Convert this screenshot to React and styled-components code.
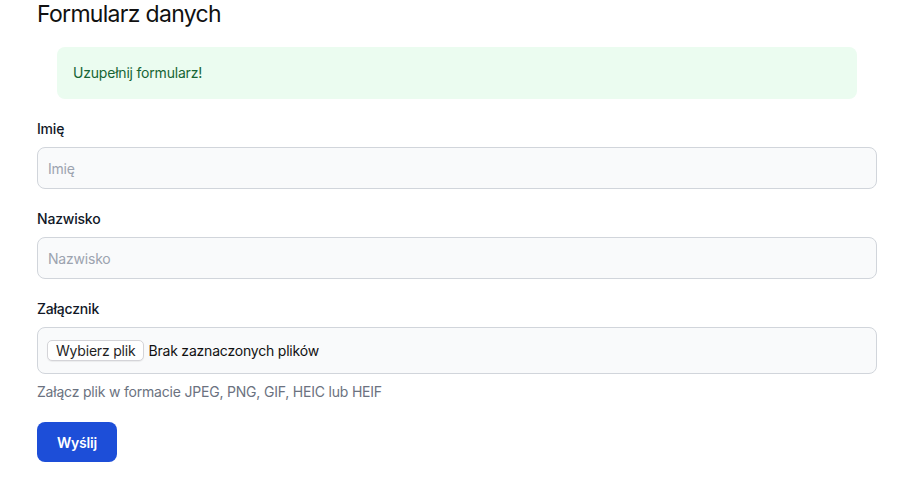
import React from 'react';
import styled, { createGlobalStyle } from 'styled-components';

const GlobalStyle = createGlobalStyle`
  body {
    margin: 0;
    background: #ffffff;
    font-family: Inter, "Noto Sans", "Liberation Sans", sans-serif;
    color: #111827;
    letter-spacing: -0.2px;
  }
  * {
    box-sizing: border-box;
  }
`;

const Page = styled.main`
  width: 840px;
  margin-left: 37px;
`;

const Title = styled.h1`
  margin: 0 0 19px 0;
  font-size: 23px;
  line-height: 28px;
  font-weight: 400;
  letter-spacing: -0.7px;
  color: #111111;
`;

const Alert = styled.div`
  margin: 0 20px 20px 20px;
  padding: 16px;
  border-radius: 8px;
  background-color: #ebfcf0;
  color: #166534;
  font-size: 14px;
  line-height: 20px;
`;

const Field = styled.div`
  margin-bottom: 20px;
`;

const Label = styled.label`
  display: block;
  margin-bottom: 8px;
  font-size: 14px;
  line-height: 20px;
  font-weight: 500;
  color: #111827;
`;

const TextInput = styled.input`
  display: block;
  width: 100%;
  height: 42px;
  padding: 10px;
  border: 1px solid #d1d5db;
  border-radius: 8px;
  background-color: #f9fafb;
  font-family: inherit;
  font-size: 14px;
  line-height: 20px;
  letter-spacing: -0.2px;
  color: #111827;
  outline: none;
  &::placeholder {
    color: #9ca3af;
  }
`;

const FileBox = styled.label`
  display: flex;
  align-items: center;
  gap: 4px;
  height: 47px;
  padding: 0 9px;
  border: 1px solid #d1d5db;
  border-radius: 8px;
  background-color: #f9fafb;
  font-size: 14px;
  color: #111111;
  cursor: pointer;
  input {
    display: none;
  }
`;

const FileButton = styled.span`
  display: inline-flex;
  align-items: center;
  height: 21px;
  padding: 0 8px;
  border: 1px solid #d4d4d8;
  border-radius: 5px;
  background-color: #ffffff;
  box-shadow: 0 1px 1px rgba(0, 0, 0, 0.06);
  color: #1f1f1f;
  font-size: 14px;
`;

const Help = styled.p`
  margin: 8px 0 0 0;
  font-size: 14px;
  line-height: 20px;
  color: #6b7280;
`;

const Submit = styled.button`
  margin-top: 20px;
  height: 40px;
  padding: 0 20px;
  border: none;
  border-radius: 8px;
  background-color: #1d4ed8;
  color: #ffffff;
  font-family: inherit;
  font-size: 14px;
  font-weight: 600;
  letter-spacing: -0.2px;
  cursor: pointer;
`;

const App = () => {
  return (
    <Page>
      <GlobalStyle />
      <Title>Formularz danych</Title>
      <Alert>Uzupełnij formularz!</Alert>
      <form onSubmit={(e) => e.preventDefault()}>
        <Field>
          <Label htmlFor="first">Imię</Label>
          <TextInput id="first" type="text" placeholder="Imię" />
        </Field>
        <Field>
          <Label htmlFor="last">Nazwisko</Label>
          <TextInput id="last" type="text" placeholder="Nazwisko" />
        </Field>
        <div>
          <Label as="div">Załącznik</Label>
          <FileBox>
            <input type="file" accept="image/jpeg,image/png,image/gif,image/heic,image/heif" />
            <FileButton>Wybierz plik</FileButton>
            <span>Brak zaznaczonych plików</span>
          </FileBox>
          <Help>Załącz plik w formacie JPEG, PNG, GIF, HEIC lub HEIF</Help>
        </div>
        <Submit type="submit">Wyślij</Submit>
      </form>
    </Page>
  );
};

export default App;
